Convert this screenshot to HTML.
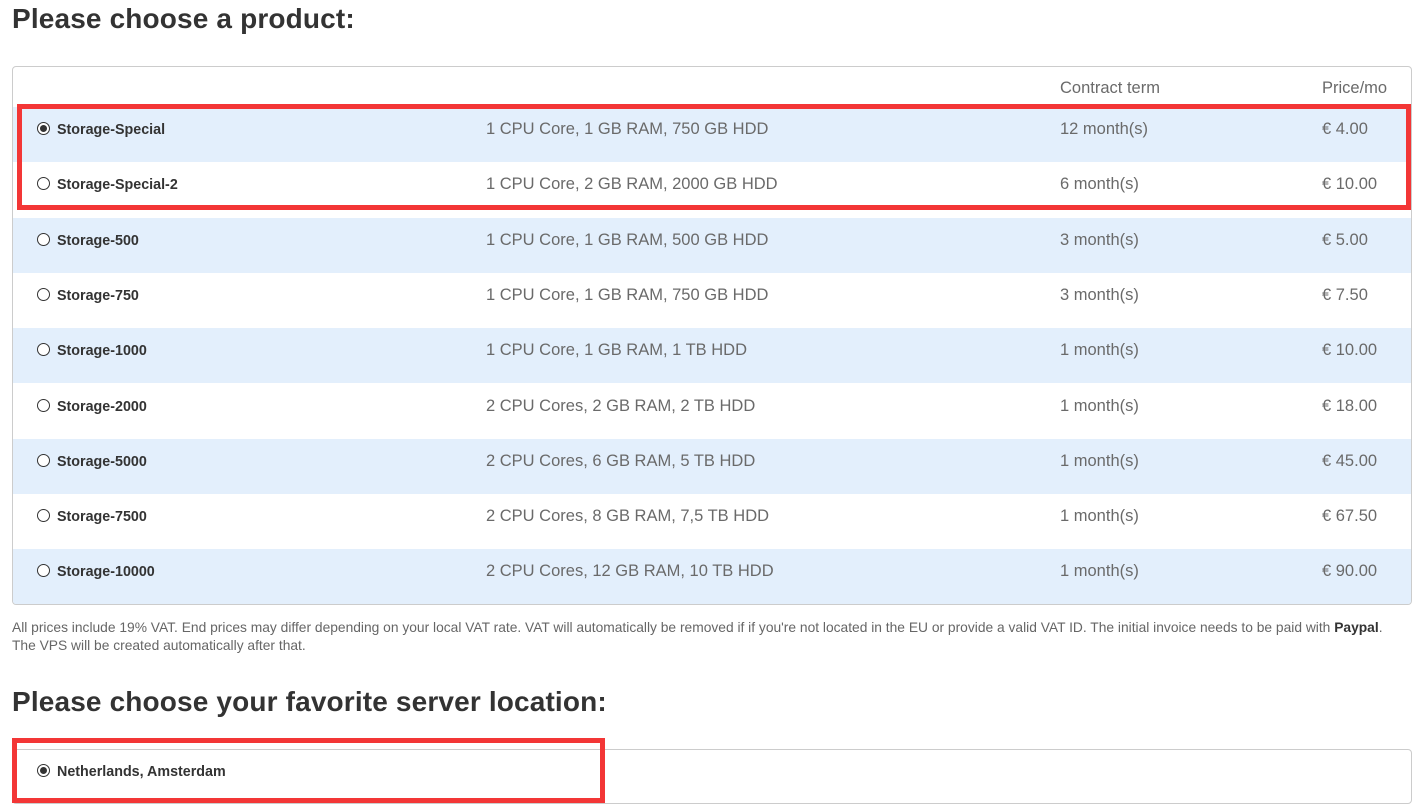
<!DOCTYPE html>
<html><head><meta charset="utf-8"><style>
*{margin:0;padding:0;box-sizing:border-box}
body{width:1420px;height:808px;background:#fff;font-family:"Liberation Sans",sans-serif;color:#333;position:relative;overflow:hidden}
h1{position:absolute;left:12px;font-size:28px;font-weight:bold;color:#333;letter-spacing:0.15px}
.box{position:absolute;left:12px;width:1400px;border:1px solid #ccc;border-radius:4px;background:#fff;overflow:hidden}
.row{position:absolute;left:0;width:1398px;height:55px;font-size:16.5px;color:#6a6a6a}
.row.b{background:#e3effc}
.row span{position:absolute;top:13px}
.n{left:44px;font-weight:bold;color:#333;font-size:14.3px;top:15px!important}
.s{left:473px}.t{left:1047px}.p{left:1309px}
.r{position:absolute;left:24px;top:15px;width:13px;height:13px;border:1px solid #333;border-radius:50%;background:#fff}
.r.on::after{content:"";position:absolute;left:2px;top:2px;width:7px;height:7px;border-radius:50%;background:#333}
.red{position:absolute;border:5px solid #f33636}
.note{position:absolute;left:12px;top:619px;font-size:13.8px;color:#666;line-height:18px;width:1400px;white-space:nowrap}
</style></head><body>
<h1 style="top:3px">Please choose a product:</h1>
<div class="box" style="top:66px;height:539px">
<div class="row" style="top:0;height:40px"><span class="t" style="top:12px">Contract term</span><span class="p" style="top:12px">Price/mo</span></div>
<div class="row b" style="top:40px"><i class="r on"></i><span class="n">Storage-Special</span><span class="s">1 CPU Core, 1 GB RAM, 750 GB HDD</span><span class="t">12 month(s)</span><span class="p">€ 4.00</span></div>
<div class="row" style="top:95px"><i class="r"></i><span class="n">Storage-Special-2</span><span class="s">1 CPU Core, 2 GB RAM, 2000 GB HDD</span><span class="t">6 month(s)</span><span class="p">€ 10.00</span></div>
<div class="row b" style="top:151px"><i class="r"></i><span class="n">Storage-500</span><span class="s">1 CPU Core, 1 GB RAM, 500 GB HDD</span><span class="t">3 month(s)</span><span class="p">€ 5.00</span></div>
<div class="row" style="top:206px"><i class="r"></i><span class="n">Storage-750</span><span class="s">1 CPU Core, 1 GB RAM, 750 GB HDD</span><span class="t">3 month(s)</span><span class="p">€ 7.50</span></div>
<div class="row b" style="top:261px"><i class="r"></i><span class="n">Storage-1000</span><span class="s">1 CPU Core, 1 GB RAM, 1 TB HDD</span><span class="t">1 month(s)</span><span class="p">€ 10.00</span></div>
<div class="row" style="top:317px"><i class="r"></i><span class="n">Storage-2000</span><span class="s">2 CPU Cores, 2 GB RAM, 2 TB HDD</span><span class="t">1 month(s)</span><span class="p">€ 18.00</span></div>
<div class="row b" style="top:372px"><i class="r"></i><span class="n">Storage-5000</span><span class="s">2 CPU Cores, 6 GB RAM, 5 TB HDD</span><span class="t">1 month(s)</span><span class="p">€ 45.00</span></div>
<div class="row" style="top:427px"><i class="r"></i><span class="n">Storage-7500</span><span class="s">2 CPU Cores, 8 GB RAM, 7,5 TB HDD</span><span class="t">1 month(s)</span><span class="p">€ 67.50</span></div>
<div class="row b" style="top:482px;height:57px"><i class="r"></i><span class="n">Storage-10000</span><span class="s">2 CPU Cores, 12 GB RAM, 10 TB HDD</span><span class="t">1 month(s)</span><span class="p">€ 90.00</span></div>
</div>
<div class="red" style="left:17px;top:104px;width:1394px;height:106px"></div>
<div class="note">All prices include 19% VAT. End prices may differ depending on your local VAT rate. VAT will automatically be removed if if you're not located in the EU or provide a valid VAT ID. The initial invoice needs to be paid with <b style="color:#333">Paypal</b>.<br>The VPS will be created automatically after that.</div>
<h1 style="top:686px">Please choose your favorite server location:</h1>
<div class="box" style="top:749px;height:55px;border-radius:4px">
<div class="row" style="top:0"><i class="r on" style="top:14px"></i><span class="n" style="top:14px!important">Netherlands, Amsterdam</span></div>
</div>
<div class="red" style="left:12px;top:738px;width:593px;height:65px"></div>
</body></html>
